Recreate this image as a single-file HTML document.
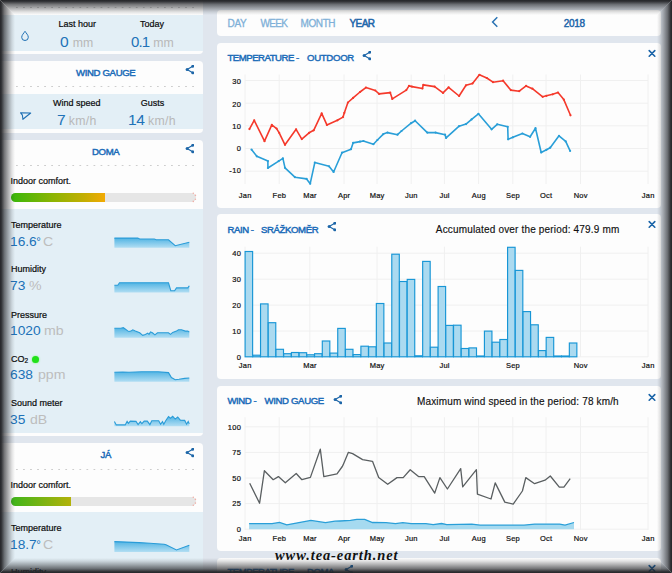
<!DOCTYPE html>
<html><head><meta charset="utf-8"><style>
*{box-sizing:border-box;margin:0;padding:0}
html,body{width:672px;height:573px;overflow:hidden;background:#e0e6ee;font-family:"Liberation Sans",sans-serif;}
.abs{position:absolute}
.card{position:absolute;background:#fdfdfd;border-radius:4px;overflow:hidden}
.blue{position:absolute;background:#e3eff6}
.dots{position:absolute;height:1px;background-image:linear-gradient(90deg,#cdcdcd 0,#cdcdcd 2px,transparent 2px);background-size:7.05px 1px}
.t{position:absolute;white-space:pre;line-height:1}
.ic{position:absolute}
.xl{position:absolute;width:30.4px;text-align:center;font-size:7.5px;line-height:10px;letter-spacing:0.2px;color:#111;-webkit-text-stroke:0.2px #111}
.yl{position:absolute;width:30.4px;text-align:right;font-size:7.5px;line-height:10px;letter-spacing:0.4px;color:#111;-webkit-text-stroke:0.2px #111}
.lbl{font-size:9px;color:#0a0a0a;-webkit-text-stroke:0.2px #0a0a0a}
.val{font-size:15px;color:#2072b8;transform:scaleX(1.04);transform-origin:0 0}
.unit{font-size:12.3px;color:#b8b8b8}
.stitle{font-size:9.6px;color:#1a6bb8;letter-spacing:-0.35px;-webkit-text-stroke:0.45px #1a6bb8}
.mtitle{font-size:9.6px;color:#1a6bb8;letter-spacing:-0.45px;-webkit-text-stroke:0.45px #1a6bb8}
.sval{font-size:12.5px;color:#2072b8;transform:scaleX(1.1);transform-origin:0 0}
.sunit{font-size:12.5px;color:#bdbdbd;transform:scaleX(1.13);transform-origin:0 0}
</style></head><body>
<!-- sidebar -->
<div class="card" style="left:-6px;top:-20px;width:209px;height:74px">
  <div class="dots" style="left:22px;top:27px;width:180px"></div>
  <div class="blue" style="left:0;top:35px;width:209px;height:35.5px"></div>
</div>
<div class="card" style="left:-6px;top:61px;width:209px;height:72px">
  <div class="dots" style="left:22px;top:25px;width:180px"></div>
  <div class="blue" style="left:0;top:33px;width:209px;height:34.5px"></div>
</div>
<div class="card" style="left:-6px;top:140px;width:209px;height:296.1px">
  <div class="dots" style="left:22px;top:25px;width:180px"></div>
  <div class="blue" style="left:0;top:68.6px;width:209px;height:224.1px"></div>
</div>
<div class="card" style="left:-6px;top:442.8px;width:209px;height:200px">
  <div class="dots" style="left:22px;top:26px;width:180px"></div>
  <div class="blue" style="left:0;top:69.7px;width:209px;height:200px"></div>
</div>

<!-- sidebar content card1 -->
<svg class="ic" style="left:20px;top:29px" width="10" height="13" viewBox="0 0 10 13"><path d="M5,2.3 C3.8,4.3 1.7,6 1.7,8.3 A3.3,3.2 0 0 0 8.3,8.3 C8.3,6 6.2,4.3 5,2.3 Z" fill="none" stroke="#1f70b4" stroke-width="1"/></svg>
<div class="t lbl" style="left:58.5px;top:19.5px">Last hour</div>
<div class="t lbl" style="left:140px;top:19.5px">Today</div>
<div class="t val" style="left:59.7px;top:33.5px">0</div><div class="t unit" style="left:72.8px;top:36.5px">mm</div>
<div class="t val" style="left:131px;top:33.5px;letter-spacing:-0.9px;transform:none">0.1</div><div class="t unit" style="left:153.3px;top:36.5px">mm</div>

<!-- card2 -->
<div class="t stitle" style="left:76px;top:67.5px">WIND GAUGE</div>
<svg class="ic" style="left:185.3px;top:65px" width="9" height="10" viewBox="0 0 9 10"><path d="M7.8,1.3 L2.1,4.5 L7.7,7.7" fill="none" stroke="#1d66a8" stroke-width="1.2"/><circle cx="7.8" cy="1.3" r="1.5" fill="#1d66a8"/><circle cx="2.1" cy="4.5" r="1.5" fill="#1d66a8"/><circle cx="7.7" cy="7.8" r="1.5" fill="#1d66a8"/></svg>
<svg class="ic" style="left:19px;top:110px" width="14" height="12" viewBox="0 0 14 12"><path d="M1.6,2.8 L11.7,3 L3.9,9.3 L3.4,5.2 Z" fill="none" stroke="#1f70b4" stroke-width="1.1" stroke-linejoin="round"/></svg>
<div class="t lbl" style="left:53px;top:98.5px">Wind speed</div>
<div class="t lbl" style="left:140.8px;top:98.5px">Gusts</div>
<div class="t val" style="left:56.5px;top:111.5px">7</div><div class="t unit" style="left:68.8px;top:114.5px;letter-spacing:0.3px">km/h</div>
<div class="t val" style="left:128px;top:111.5px;letter-spacing:-0.5px">14</div><div class="t unit" style="left:148px;top:114.5px;letter-spacing:0.3px">km/h</div>

<!-- card3 DOMA -->
<div class="t stitle" style="left:92px;top:147px">DOMA</div>
<svg class="ic" style="left:185.3px;top:144px" width="9" height="10" viewBox="0 0 9 10"><path d="M7.8,1.3 L2.1,4.5 L7.7,7.7" fill="none" stroke="#1d66a8" stroke-width="1.2"/><circle cx="7.8" cy="1.3" r="1.5" fill="#1d66a8"/><circle cx="2.1" cy="4.5" r="1.5" fill="#1d66a8"/><circle cx="7.7" cy="7.8" r="1.5" fill="#1d66a8"/></svg>
<div class="t lbl" style="left:10.5px;top:176.5px">Indoor comfort.</div>
<div class="abs" style="left:11px;top:193px;width:185px;height:9px;border-radius:4.5px;background:#e6e6e6;overflow:hidden"><div style="width:94px;height:9px;background:linear-gradient(90deg,#38b70a,#8db402 45%,#c4ae02 78%,#f2aa04)"></div></div>
<svg class="ic" style="left:190px;top:190px" width="8" height="14"><g fill="#f0b0a8"><circle cx="3.3" cy="3.3" r="0.8"/><circle cx="5.4" cy="5.4" r="0.8"/><circle cx="5.4" cy="9.3" r="0.8"/><circle cx="3.3" cy="11.4" r="0.8"/></g></svg>
<div class="t lbl" style="left:11px;top:220.6px">Temperature</div>
<div class="t sval" style="left:10px;top:235.5px">16.6<span style="margin-left:-0.6px;font-size:10.5px;vertical-align:1px">°</span></div><div class="t sunit" style="left:42.5px;top:235.5px">C</div>
<div class="t lbl" style="left:11px;top:264.6px">Humidity</div>
<div class="t sval" style="left:10px;top:280px">73</div><div class="t sunit" style="left:29.3px;top:280px">%</div>
<div class="t lbl" style="left:11px;top:310.5px">Pressure</div>
<div class="t sval" style="left:10px;top:324.5px">1020</div><div class="t sunit" style="left:43.7px;top:324.5px">mb</div>
<div class="t lbl" style="left:11px;top:354.5px">CO<span style="font-size:6.5px;position:relative;top:1.5px">2</span></div>
<div class="abs" style="left:32px;top:355.5px;width:7px;height:7px;border-radius:50%;background:#22e01a;box-shadow:0 0 2px #6f6"></div>
<div class="t sval" style="left:10px;top:369px">638</div><div class="t sunit" style="left:37.8px;top:369px">ppm</div>
<div class="t lbl" style="left:11px;top:399px">Sound meter</div>
<div class="t sval" style="left:10px;top:413.5px">35</div><div class="t sunit" style="left:29.5px;top:413.5px">dB</div>

<!-- card4 JA -->
<div class="t stitle" style="left:100.5px;top:449.5px">JÁ</div>
<svg class="ic" style="left:185.3px;top:448px" width="9" height="10" viewBox="0 0 9 10"><path d="M7.8,1.3 L2.1,4.5 L7.7,7.7" fill="none" stroke="#1d66a8" stroke-width="1.2"/><circle cx="7.8" cy="1.3" r="1.5" fill="#1d66a8"/><circle cx="2.1" cy="4.5" r="1.5" fill="#1d66a8"/><circle cx="7.7" cy="7.8" r="1.5" fill="#1d66a8"/></svg>
<div class="t lbl" style="left:10.5px;top:480.5px">Indoor comfort.</div>
<div class="abs" style="left:11px;top:497px;width:185px;height:8.5px;border-radius:4.5px;background:#e6e6e6;overflow:hidden"><div style="width:60px;height:9px;background:linear-gradient(90deg,#3db51b,#b3b20a)"></div></div>
<svg class="ic" style="left:190px;top:494px" width="8" height="14"><g fill="#f0b0a8"><circle cx="3.3" cy="3.3" r="0.8"/><circle cx="5.4" cy="5.4" r="0.8"/><circle cx="5.4" cy="9.1" r="0.8"/><circle cx="3.3" cy="11.2" r="0.8"/></g></svg>
<div class="t lbl" style="left:11px;top:524px">Temperature</div>
<div class="t sval" style="left:10px;top:538.5px">18.7<span style="margin-left:-0.6px;font-size:10.5px;vertical-align:1px">°</span></div><div class="t sunit" style="left:42.5px;top:538.5px">C</div>
<div class="t lbl" style="left:11px;top:568px">Humidity</div>

<!-- main header -->
<div class="card" style="left:217px;top:10px;width:444px;height:25.8px"></div>
<div class="t" style="left:227.5px;top:18.5px;font-size:10px;color:#7fb0d8;letter-spacing:-0.3px;-webkit-text-stroke:0.3px #7fb0d8">DAY</div>
<div class="t" style="left:260.5px;top:18.5px;font-size:10px;color:#7fb0d8;letter-spacing:-0.7px;-webkit-text-stroke:0.3px #7fb0d8">WEEK</div>
<div class="t" style="left:300.5px;top:18.5px;font-size:10px;color:#7fb0d8;letter-spacing:-0.4px;-webkit-text-stroke:0.3px #7fb0d8">MONTH</div>
<div class="t" style="left:349.5px;top:18.5px;font-size:10px;color:#1d66aa;letter-spacing:-0.55px;-webkit-text-stroke:0.5px #1d66aa">YEAR</div>
<svg class="ic" style="left:490px;top:16px" width="10" height="12" viewBox="0 0 10 12"><path d="M7.3,1.3 L2.6,6 L7.3,10.7" fill="none" stroke="#2a73b3" stroke-width="1.5"/></svg>
<div class="t" style="left:563.8px;top:18.5px;font-size:10px;color:#1d66aa;letter-spacing:-0.35px;-webkit-text-stroke:0.45px #1d66aa">2018</div>

<!-- cards -->
<div class="card" style="left:217px;top:43px;width:444px;height:164.8px"></div>
<div class="card" style="left:217px;top:214.2px;width:444px;height:164.8px"></div>
<div class="card" style="left:217px;top:385.6px;width:444px;height:165.4px"></div>
<div class="card" style="left:217px;top:558px;width:444px;height:40px"></div>

<div class="t mtitle" style="left:227.5px;top:52.8px;letter-spacing:-0.5px">TEMPERATURE -</div><div class="t mtitle" style="left:307px;top:52.8px;letter-spacing:-0.3px">OUTDOOR</div>
<svg class="ic" style="left:362px;top:51px" width="9" height="10" viewBox="0 0 9 10"><path d="M7.8,1.3 L2.1,4.5 L7.7,7.7" fill="none" stroke="#1d66a8" stroke-width="1.2"/><circle cx="7.8" cy="1.3" r="1.5" fill="#1d66a8"/><circle cx="2.1" cy="4.5" r="1.5" fill="#1d66a8"/><circle cx="7.7" cy="7.8" r="1.5" fill="#1d66a8"/></svg>
<svg class="ic" style="left:647.9px;top:49px" width="8" height="9" viewBox="0 0 8 9"><path d="M1.2,1.6 L6.8,7.2 M6.8,1.6 L1.2,7.2" stroke="#1a64a8" stroke-width="1.6" stroke-linecap="round"/></svg>
<div class="t mtitle" style="left:227.5px;top:224.5px">RAIN -</div><div class="t mtitle" style="left:261px;top:224.5px;letter-spacing:-0.4px">SRÁŽKOMĚR</div>
<svg class="ic" style="left:326.5px;top:222px" width="9" height="10" viewBox="0 0 9 10"><path d="M7.8,1.3 L2.1,4.5 L7.7,7.7" fill="none" stroke="#1d66a8" stroke-width="1.2"/><circle cx="7.8" cy="1.3" r="1.5" fill="#1d66a8"/><circle cx="2.1" cy="4.5" r="1.5" fill="#1d66a8"/><circle cx="7.7" cy="7.8" r="1.5" fill="#1d66a8"/></svg>
<div class="t" style="left:435.8px;top:225px;font-size:10px;letter-spacing:0.17px;color:#111;-webkit-text-stroke:0.15px #111">Accumulated over the period: 479.9 mm</div>
<svg class="ic" style="left:648px;top:220px" width="8" height="9" viewBox="0 0 8 9"><path d="M1.2,1.6 L6.8,7.2 M6.8,1.6 L1.2,7.2" stroke="#1a64a8" stroke-width="1.6" stroke-linecap="round"/></svg>
<div class="t mtitle" style="left:227.5px;top:396px">WIND -</div><div class="t mtitle" style="left:264.5px;top:396px;letter-spacing:-0.35px">WIND GAUGE</div>
<svg class="ic" style="left:333px;top:394.5px" width="9" height="10" viewBox="0 0 9 10"><path d="M7.8,1.3 L2.1,4.5 L7.7,7.7" fill="none" stroke="#1d66a8" stroke-width="1.2"/><circle cx="7.8" cy="1.3" r="1.5" fill="#1d66a8"/><circle cx="2.1" cy="4.5" r="1.5" fill="#1d66a8"/><circle cx="7.7" cy="7.8" r="1.5" fill="#1d66a8"/></svg>
<div class="t" style="left:417px;top:396.5px;font-size:10px;letter-spacing:0.15px;color:#111;-webkit-text-stroke:0.15px #111">Maximum wind speed in the period: 78 km/h</div>
<svg class="ic" style="left:647.5px;top:392.6px" width="8" height="9" viewBox="0 0 8 9"><path d="M1.2,1.6 L6.8,7.2 M6.8,1.6 L1.2,7.2" stroke="#1a64a8" stroke-width="1.6" stroke-linecap="round"/></svg>
<div class="t mtitle" style="left:227.5px;top:567px;letter-spacing:-0.5px">TEMPERATURE -</div><div class="t mtitle" style="left:307px;top:567px">DOMA</div>
<svg class="ic" style="left:344px;top:565px" width="9" height="10" viewBox="0 0 9 10"><path d="M7.8,1.3 L2.1,4.5 L7.7,7.7" fill="none" stroke="#1d66a8" stroke-width="1.2"/><circle cx="7.8" cy="1.3" r="1.5" fill="#1d66a8"/><circle cx="2.1" cy="4.5" r="1.5" fill="#1d66a8"/><circle cx="7.7" cy="7.8" r="1.5" fill="#1d66a8"/></svg>
<svg class="ic" style="left:647.8px;top:563.8px" width="8" height="9" viewBox="0 0 8 9"><path d="M1.2,1.6 L6.8,7.2 M6.8,1.6 L1.2,7.2" stroke="#1a64a8" stroke-width="1.6" stroke-linecap="round"/></svg>

<svg class="abs" style="left:0;top:0" width="672" height="573" viewBox="0 0 672 573">
<defs><linearGradient id="sg" x1="0" y1="0" x2="0" y2="1"><stop offset="0" stop-color="#52b4e3"/><stop offset="1" stop-color="#b2def3"/></linearGradient></defs>
<g stroke="#f0f0f0" stroke-width="1"><line x1="245" y1="80.5" x2="648" y2="80.5"/><line x1="245" y1="103.2" x2="648" y2="103.2"/><line x1="245" y1="125.8" x2="648" y2="125.8"/><line x1="245" y1="148.5" x2="648" y2="148.5"/><line x1="245" y1="171.2" x2="648" y2="171.2"/><line x1="245" y1="74.5" x2="245" y2="184"/><line x1="279.2" y1="74.5" x2="279.2" y2="184"/><line x1="309.8" y1="74.5" x2="309.8" y2="184"/><line x1="344" y1="74.5" x2="344" y2="184"/><line x1="377" y1="74.5" x2="377" y2="184"/><line x1="411.2" y1="74.5" x2="411.2" y2="184"/><line x1="444.4" y1="74.5" x2="444.4" y2="184"/><line x1="478.6" y1="74.5" x2="478.6" y2="184"/><line x1="512.8" y1="74.5" x2="512.8" y2="184"/><line x1="546" y1="74.5" x2="546" y2="184"/><line x1="580.5" y1="74.5" x2="580.5" y2="184"/><line x1="648" y1="74.5" x2="648" y2="184"/></g>
<polyline points="249.4,129.1 254.2,120.3 264.5,141.2 271.8,124.9 276.6,128.6 279.2,132.8 285.0,144.8 296.1,129.3 301.8,139.1 309.1,132.8 313.7,130.3 321.7,113.4 326.9,124.9 337.4,120.3 343.0,117.1 344.3,112.9 347.9,102.5 353.1,97.9 360.0,92.0 365.9,87.6 375.3,90.5 379.1,93.9 390.2,92.6 392.3,98.9 406.3,90.1 409.0,85.9 412.0,86.6 422.4,88.5 423.3,84.9 434.6,86.6 443.0,92.9 448.6,87.4 459.1,96.0 466.0,85.3 472.5,83.4 479.4,74.8 486.8,78.0 493.0,82.2 503.1,80.7 510.8,90.1 519.2,91.2 526.1,85.9 532.4,88.7 542.7,96.8 546.4,95.8 552.7,94.3 558.0,92.6 563.8,99.6 570.5,115.3" fill="none" stroke="#f5392b" stroke-width="1.6" stroke-linejoin="round"/>
<polyline points="251.5,149.6 256.8,156.3 267.9,161.1 267.9,168.0 278.7,161.1 282.9,158.4 285.0,167.8 294.9,177.2 306.6,178.9 310.2,183.7 314.8,162.6 329.0,166.3 333.6,172.0 342.0,152.7 351.0,149.2 353.1,142.9 360.0,141.6 363.4,141.0 373.4,144.2 377.4,140.0 383.3,134.1 387.5,132.6 397.5,134.7 401.5,131.0 411.1,123.2 415.1,120.7 427.3,132.6 435.6,132.6 445.1,134.7 446.1,137.9 459.1,126.2 466.0,124.1 471.6,119.4 478.4,113.8 491.6,129.3 497.2,124.3 507.7,126.8 508.1,139.3 512.9,137.3 522.4,133.5 530.1,136.8 535.5,128.2 541.2,152.5 546.4,149.8 550.2,147.7 559.0,135.8 565.7,141.4 570.1,150.9" fill="none" stroke="#2a9fd8" stroke-width="1.6" stroke-linejoin="round"/>
<circle cx="249.4" cy="129.1" r="1.1" fill="#f5392b"/>
<circle cx="254.2" cy="120.3" r="1.1" fill="#f5392b"/>
<circle cx="264.5" cy="141.2" r="1.1" fill="#f5392b"/>
<circle cx="271.8" cy="124.9" r="1.1" fill="#f5392b"/>
<circle cx="276.6" cy="128.6" r="1.1" fill="#f5392b"/>
<circle cx="279.2" cy="132.8" r="1.1" fill="#f5392b"/>
<circle cx="285" cy="144.8" r="1.1" fill="#f5392b"/>
<circle cx="296.1" cy="129.3" r="1.1" fill="#f5392b"/>
<circle cx="301.8" cy="139.1" r="1.1" fill="#f5392b"/>
<circle cx="309.1" cy="132.8" r="1.1" fill="#f5392b"/>
<circle cx="313.7" cy="130.3" r="1.1" fill="#f5392b"/>
<circle cx="321.7" cy="113.4" r="1.1" fill="#f5392b"/>
<circle cx="326.9" cy="124.9" r="1.1" fill="#f5392b"/>
<circle cx="337.4" cy="120.3" r="1.1" fill="#f5392b"/>
<circle cx="343" cy="117.1" r="1.1" fill="#f5392b"/>
<circle cx="344.3" cy="112.9" r="1.1" fill="#f5392b"/>
<circle cx="347.9" cy="102.5" r="1.1" fill="#f5392b"/>
<circle cx="353.1" cy="97.9" r="1.1" fill="#f5392b"/>
<circle cx="360" cy="92" r="1.1" fill="#f5392b"/>
<circle cx="365.9" cy="87.6" r="1.1" fill="#f5392b"/>
<circle cx="375.3" cy="90.5" r="1.1" fill="#f5392b"/>
<circle cx="379.1" cy="93.9" r="1.1" fill="#f5392b"/>
<circle cx="390.2" cy="92.6" r="1.1" fill="#f5392b"/>
<circle cx="392.3" cy="98.9" r="1.1" fill="#f5392b"/>
<circle cx="406.3" cy="90.1" r="1.1" fill="#f5392b"/>
<circle cx="409" cy="85.9" r="1.1" fill="#f5392b"/>
<circle cx="412" cy="86.6" r="1.1" fill="#f5392b"/>
<circle cx="422.4" cy="88.5" r="1.1" fill="#f5392b"/>
<circle cx="423.3" cy="84.9" r="1.1" fill="#f5392b"/>
<circle cx="434.6" cy="86.6" r="1.1" fill="#f5392b"/>
<circle cx="443" cy="92.9" r="1.1" fill="#f5392b"/>
<circle cx="448.6" cy="87.4" r="1.1" fill="#f5392b"/>
<circle cx="459.1" cy="96" r="1.1" fill="#f5392b"/>
<circle cx="466" cy="85.3" r="1.1" fill="#f5392b"/>
<circle cx="472.5" cy="83.4" r="1.1" fill="#f5392b"/>
<circle cx="479.4" cy="74.8" r="1.1" fill="#f5392b"/>
<circle cx="486.8" cy="78" r="1.1" fill="#f5392b"/>
<circle cx="493" cy="82.2" r="1.1" fill="#f5392b"/>
<circle cx="503.1" cy="80.7" r="1.1" fill="#f5392b"/>
<circle cx="510.8" cy="90.1" r="1.1" fill="#f5392b"/>
<circle cx="519.2" cy="91.2" r="1.1" fill="#f5392b"/>
<circle cx="526.1" cy="85.9" r="1.1" fill="#f5392b"/>
<circle cx="532.4" cy="88.7" r="1.1" fill="#f5392b"/>
<circle cx="542.7" cy="96.8" r="1.1" fill="#f5392b"/>
<circle cx="546.4" cy="95.8" r="1.1" fill="#f5392b"/>
<circle cx="552.7" cy="94.3" r="1.1" fill="#f5392b"/>
<circle cx="558" cy="92.6" r="1.1" fill="#f5392b"/>
<circle cx="563.8" cy="99.6" r="1.1" fill="#f5392b"/>
<circle cx="570.5" cy="115.3" r="1.1" fill="#f5392b"/>
<circle cx="251.5" cy="149.6" r="1.1" fill="#2a9fd8"/>
<circle cx="256.8" cy="156.3" r="1.1" fill="#2a9fd8"/>
<circle cx="267.9" cy="161.1" r="1.1" fill="#2a9fd8"/>
<circle cx="267.9" cy="168" r="1.1" fill="#2a9fd8"/>
<circle cx="278.7" cy="161.1" r="1.1" fill="#2a9fd8"/>
<circle cx="282.9" cy="158.4" r="1.1" fill="#2a9fd8"/>
<circle cx="285" cy="167.8" r="1.1" fill="#2a9fd8"/>
<circle cx="294.9" cy="177.2" r="1.1" fill="#2a9fd8"/>
<circle cx="306.6" cy="178.9" r="1.1" fill="#2a9fd8"/>
<circle cx="310.2" cy="183.7" r="1.1" fill="#2a9fd8"/>
<circle cx="314.8" cy="162.6" r="1.1" fill="#2a9fd8"/>
<circle cx="329" cy="166.3" r="1.1" fill="#2a9fd8"/>
<circle cx="333.6" cy="172" r="1.1" fill="#2a9fd8"/>
<circle cx="342" cy="152.7" r="1.1" fill="#2a9fd8"/>
<circle cx="351" cy="149.2" r="1.1" fill="#2a9fd8"/>
<circle cx="353.1" cy="142.9" r="1.1" fill="#2a9fd8"/>
<circle cx="360" cy="141.6" r="1.1" fill="#2a9fd8"/>
<circle cx="363.4" cy="141" r="1.1" fill="#2a9fd8"/>
<circle cx="373.4" cy="144.2" r="1.1" fill="#2a9fd8"/>
<circle cx="377.4" cy="140" r="1.1" fill="#2a9fd8"/>
<circle cx="383.3" cy="134.1" r="1.1" fill="#2a9fd8"/>
<circle cx="387.5" cy="132.6" r="1.1" fill="#2a9fd8"/>
<circle cx="397.5" cy="134.7" r="1.1" fill="#2a9fd8"/>
<circle cx="401.5" cy="131" r="1.1" fill="#2a9fd8"/>
<circle cx="411.1" cy="123.2" r="1.1" fill="#2a9fd8"/>
<circle cx="415.1" cy="120.7" r="1.1" fill="#2a9fd8"/>
<circle cx="427.3" cy="132.6" r="1.1" fill="#2a9fd8"/>
<circle cx="435.6" cy="132.6" r="1.1" fill="#2a9fd8"/>
<circle cx="445.1" cy="134.7" r="1.1" fill="#2a9fd8"/>
<circle cx="446.1" cy="137.9" r="1.1" fill="#2a9fd8"/>
<circle cx="459.1" cy="126.2" r="1.1" fill="#2a9fd8"/>
<circle cx="466" cy="124.1" r="1.1" fill="#2a9fd8"/>
<circle cx="471.6" cy="119.4" r="1.1" fill="#2a9fd8"/>
<circle cx="478.4" cy="113.8" r="1.1" fill="#2a9fd8"/>
<circle cx="491.6" cy="129.3" r="1.1" fill="#2a9fd8"/>
<circle cx="497.2" cy="124.3" r="1.1" fill="#2a9fd8"/>
<circle cx="507.7" cy="126.8" r="1.1" fill="#2a9fd8"/>
<circle cx="508.1" cy="139.3" r="1.1" fill="#2a9fd8"/>
<circle cx="512.9" cy="137.3" r="1.1" fill="#2a9fd8"/>
<circle cx="522.4" cy="133.5" r="1.1" fill="#2a9fd8"/>
<circle cx="530.1" cy="136.8" r="1.1" fill="#2a9fd8"/>
<circle cx="535.5" cy="128.2" r="1.1" fill="#2a9fd8"/>
<circle cx="541.2" cy="152.5" r="1.1" fill="#2a9fd8"/>
<circle cx="546.4" cy="149.8" r="1.1" fill="#2a9fd8"/>
<circle cx="550.2" cy="147.7" r="1.1" fill="#2a9fd8"/>
<circle cx="559" cy="135.8" r="1.1" fill="#2a9fd8"/>
<circle cx="565.7" cy="141.4" r="1.1" fill="#2a9fd8"/>
<circle cx="570.1" cy="150.9" r="1.1" fill="#2a9fd8"/>
<g stroke="#f0f0f0" stroke-width="1"><line x1="245" y1="253.2" x2="648" y2="253.2"/><line x1="245" y1="279.2" x2="648" y2="279.2"/><line x1="245" y1="305.1" x2="648" y2="305.1"/><line x1="245" y1="331" x2="648" y2="331"/><line x1="245" y1="356.8" x2="648" y2="356.8"/><line x1="245" y1="246.7" x2="245" y2="357"/><line x1="309.8" y1="246.7" x2="309.8" y2="357"/><line x1="377" y1="246.7" x2="377" y2="357"/><line x1="444.4" y1="246.7" x2="444.4" y2="357"/><line x1="512.8" y1="246.7" x2="512.8" y2="357"/><line x1="580.5" y1="246.7" x2="580.5" y2="357"/><line x1="648" y1="246.7" x2="648" y2="357"/></g>
<g fill="#abdaf0" stroke="#1796d6" stroke-width="1.15"><rect x="245.10" y="251.5" width="7.52" height="105.3"/><rect x="252.82" y="355.2" width="7.52" height="1.6"/><rect x="260.54" y="303.9" width="7.52" height="52.9"/><rect x="268.26" y="322.7" width="7.52" height="34.1"/><rect x="275.98" y="349.3" width="7.52" height="7.5"/><rect x="283.70" y="353.7" width="7.52" height="3.1"/><rect x="291.42" y="352.5" width="7.52" height="4.3"/><rect x="299.14" y="352.7" width="7.52" height="4.1"/><rect x="306.86" y="354.8" width="7.52" height="2.0"/><rect x="314.58" y="353.7" width="7.52" height="3.1"/><rect x="322.30" y="341.0" width="7.52" height="15.8"/><rect x="330.02" y="353.1" width="7.52" height="3.7"/><rect x="337.74" y="328.4" width="7.52" height="28.4"/><rect x="345.46" y="349.3" width="7.52" height="7.5"/><rect x="353.18" y="354.6" width="7.52" height="2.2"/><rect x="360.90" y="346.2" width="7.52" height="10.6"/><rect x="368.62" y="346.8" width="7.52" height="10.0"/><rect x="376.34" y="303.5" width="7.52" height="53.3"/><rect x="384.06" y="343.0" width="7.52" height="13.8"/><rect x="391.78" y="254.2" width="7.52" height="102.6"/><rect x="399.50" y="281.5" width="7.52" height="75.3"/><rect x="407.22" y="279.4" width="7.52" height="77.4"/><rect x="414.94" y="355.8" width="7.52" height="1.0"/><rect x="422.66" y="261.4" width="7.52" height="95.4"/><rect x="430.38" y="347.2" width="7.52" height="9.6"/><rect x="438.10" y="286.5" width="7.52" height="70.3"/><rect x="445.82" y="325.4" width="7.52" height="31.4"/><rect x="453.54" y="325.2" width="7.52" height="31.6"/><rect x="461.26" y="348.5" width="7.52" height="8.3"/><rect x="468.98" y="347.9" width="7.52" height="8.9"/><rect x="476.70" y="356.0" width="7.52" height="0.8"/><rect x="484.42" y="331.1" width="7.52" height="25.7"/><rect x="492.14" y="342.2" width="7.52" height="14.6"/><rect x="499.86" y="339.5" width="7.52" height="17.3"/><rect x="507.58" y="247.3" width="7.52" height="109.5"/><rect x="515.30" y="270.4" width="7.52" height="86.4"/><rect x="523.02" y="311.6" width="7.52" height="45.2"/><rect x="530.74" y="324.8" width="7.52" height="32.0"/><rect x="538.46" y="350.6" width="7.52" height="6.2"/><rect x="546.18" y="337.4" width="7.52" height="19.4"/><rect x="553.90" y="356.0" width="7.52" height="0.8"/><rect x="561.62" y="356.0" width="7.52" height="0.8"/><rect x="569.34" y="343.0" width="7.52" height="13.8"/></g>
<g stroke="#f0f0f0" stroke-width="1"><line x1="245" y1="426.8" x2="648" y2="426.8"/><line x1="245" y1="452.4" x2="648" y2="452.4"/><line x1="245" y1="478" x2="648" y2="478"/><line x1="245" y1="503.6" x2="648" y2="503.6"/><line x1="245" y1="529.2" x2="648" y2="529.2"/><line x1="245" y1="417.2" x2="245" y2="530"/><line x1="279.2" y1="417.2" x2="279.2" y2="530"/><line x1="309.8" y1="417.2" x2="309.8" y2="530"/><line x1="344" y1="417.2" x2="344" y2="530"/><line x1="377" y1="417.2" x2="377" y2="530"/><line x1="411.2" y1="417.2" x2="411.2" y2="530"/><line x1="444.4" y1="417.2" x2="444.4" y2="530"/><line x1="478.6" y1="417.2" x2="478.6" y2="530"/><line x1="512.8" y1="417.2" x2="512.8" y2="530"/><line x1="546" y1="417.2" x2="546" y2="530"/><line x1="580.5" y1="417.2" x2="580.5" y2="530"/><line x1="648" y1="417.2" x2="648" y2="530"/></g>
<path d="M249.1,523.7 L272.1,523.7 L279.5,522.3 L286.8,524.8 L296.2,523.1 L310.9,520.4 L325.5,522.7 L335.0,521.2 L340.0,521.0 L350.5,520.4 L356.8,519.3 L364.7,519.3 L372.5,522.5 L386.1,522.7 L395.5,523.7 L402.8,522.7 L411.2,523.7 L425.9,523.7 L433.2,524.6 L441.6,523.5 L446.8,524.6 L471.8,524.1 L480.1,525.2 L524.1,525.2 L534.6,524.1 L559.7,524.1 L565.0,525.2 L574.0,522.5 L574,529.2 L249.1,529.2 Z" fill="#a6daf0"/>
<polyline points="249.1,523.7 272.1,523.7 279.5,522.3 286.8,524.8 296.2,523.1 310.9,520.4 325.5,522.7 335.0,521.2 340.0,521.0 350.5,520.4 356.8,519.3 364.7,519.3 372.5,522.5 386.1,522.7 395.5,523.7 402.8,522.7 411.2,523.7 425.9,523.7 433.2,524.6 441.6,523.5 446.8,524.6 471.8,524.1 480.1,525.2 524.1,525.2 534.6,524.1 559.7,524.1 565.0,525.2 574.0,522.5" fill="none" stroke="#2a9fd8" stroke-width="1.3"/>
<polyline points="249.7,483.3 259.6,503.2 264.4,470.7 273.2,479.7 278.4,476.6 285.3,482.7 296.2,473.5 301.9,479.7 310.4,477.4 320.3,449.2 323.8,476.6 337.0,473.9 342.3,466.5 343.1,464.9 348.4,452.3 352.6,453.6 362.6,459.6 372.5,461.3 378.7,477.4 387.7,484.3 397.0,477.6 403.2,477.6 410.2,469.7 418.5,476.6 424.2,476.6 434.7,493.1 439.9,477.6 447.4,489.0 460.7,468.6 462.7,486.9 476.4,469.7 477.4,494.2 491.0,499.0 495.2,482.9 504.8,502.1 513.2,504.2 522.4,491.0 525.8,477.6 534.6,483.7 545.0,480.2 550.3,476.0 559.3,487.1 563.9,487.1 570.2,478.7" fill="none" stroke="#5a5f61" stroke-width="1.3" stroke-linejoin="round"/>
<path d="M114.4,238.1 L137.8,238.1 L139.7,239.0 L154.3,239.0 L156.2,239.8 L168.5,239.8 L175.2,245.7 L189.3,242.3 L189.3,247.8 L114.4,247.8 Z" fill="url(#sg)"/><path d="M114.4,238.1 L137.8,238.1 L139.7,239.0 L154.3,239.0 L156.2,239.8 L168.5,239.8 L175.2,245.7 L189.3,242.3" fill="none" stroke="#2a9cd8" stroke-width="1.1"/>
<path d="M114.4,285.3 L117.8,285.3 L119.5,282.8 L168.5,282.8 L170.8,290.7 L174.6,290.7 L176.5,287.9 L187.8,287.9 L189.3,285.8 L189.3,292.6 L114.4,292.6 Z" fill="url(#sg)"/><path d="M114.4,285.3 L117.8,285.3 L119.5,282.8 L168.5,282.8 L170.8,290.7 L174.6,290.7 L176.5,287.9 L187.8,287.9 L189.3,285.8" fill="none" stroke="#2a9cd8" stroke-width="1.1"/>
<path d="M114.4,328.3 L120.8,328.3 L123.3,327.7 L125.2,329.0 L127.7,330.9 L129.0,331.5 L130.9,331.1 L132.8,329.8 L135.3,331.1 L139.7,332.8 L142.7,335.3 L145.4,334.4 L147.7,333.1 L149.0,334.4 L150.5,331.9 L152.4,332.8 L154.9,334.9 L157.5,332.8 L168.5,332.8 L170.5,334.4 L172.7,332.4 L176.5,331.1 L178.4,329.8 L181.5,329.8 L185.3,331.1 L187.8,331.1 L189.3,331.9 L189.3,337.8 L114.4,337.8 Z" fill="url(#sg)"/><path d="M114.4,328.3 L120.8,328.3 L123.3,327.7 L125.2,329.0 L127.7,330.9 L129.0,331.5 L130.9,331.1 L132.8,329.8 L135.3,331.1 L139.7,332.8 L142.7,335.3 L145.4,334.4 L147.7,333.1 L149.0,334.4 L150.5,331.9 L152.4,332.8 L154.9,334.9 L157.5,332.8 L168.5,332.8 L170.5,334.4 L172.7,332.4 L176.5,331.1 L178.4,329.8 L181.5,329.8 L185.3,331.1 L187.8,331.1 L189.3,331.9" fill="none" stroke="#2a9cd8" stroke-width="1.1"/>
<path d="M114.4,372.3 L122.7,372.1 L129.0,372.3 L141.6,371.7 L148.0,371.7 L158.1,371.7 L168.5,372.6 L171.4,377.6 L175.2,379.7 L179.0,379.3 L184.7,378.4 L189.3,378.0 L189.3,381.8 L114.4,381.8 Z" fill="url(#sg)"/><path d="M114.4,372.3 L122.7,372.1 L129.0,372.3 L141.6,371.7 L148.0,371.7 L158.1,371.7 L168.5,372.6 L171.4,377.6 L175.2,379.7 L179.0,379.3 L184.7,378.4 L189.3,378.0" fill="none" stroke="#2a9cd8" stroke-width="1.1"/>
<path d="M114.4,421.4 L116.3,424.9 L125.2,424.9 L127.1,421.4 L128.4,423.3 L130.3,421.1 L136.0,421.4 L138.1,424.6 L140.4,421.6 L141.9,423.7 L144.2,421.1 L147.3,421.1 L149.9,424.6 L151.8,420.8 L158.7,420.8 L160.6,424.2 L162.5,421.6 L163.8,424.2 L165.7,420.8 L168.5,416.6 L170.5,418.2 L172.7,416.3 L175.2,419.1 L177.7,417.0 L180.3,420.1 L184.7,420.4 L186.6,424.2 L188.2,421.4 L189.3,423.9 L189.3,426.2 L114.4,426.2 Z" fill="url(#sg)"/><path d="M114.4,421.4 L116.3,424.9 L125.2,424.9 L127.1,421.4 L128.4,423.3 L130.3,421.1 L136.0,421.4 L138.1,424.6 L140.4,421.6 L141.9,423.7 L144.2,421.1 L147.3,421.1 L149.9,424.6 L151.8,420.8 L158.7,420.8 L160.6,424.2 L162.5,421.6 L163.8,424.2 L165.7,420.8 L168.5,416.6 L170.5,418.2 L172.7,416.3 L175.2,419.1 L177.7,417.0 L180.3,420.1 L184.7,420.4 L186.6,424.2 L188.2,421.4 L189.3,423.9" fill="none" stroke="#2a9cd8" stroke-width="1.1"/>
<path d="M114.4,541.6 L139.0,542.6 L150.0,543.2 L164.0,544.2 L166.0,544.7 L176.5,550.0 L189.3,545.3 L189.3,552 L114.4,552 Z" fill="url(#sg)"/><path d="M114.4,541.6 L139.0,542.6 L150.0,543.2 L164.0,544.2 L166.0,544.7 L176.5,550.0 L189.3,545.3" fill="none" stroke="#2a9cd8" stroke-width="1.1"/>
</svg>

<div class="yl" style="left:211px;top:77.0px">30</div><div class="yl" style="left:211px;top:100.0px">20</div><div class="yl" style="left:211px;top:122.0px">10</div><div class="yl" style="left:211px;top:144.0px">0</div><div class="yl" style="left:211px;top:166.3px">-10</div>
<div class="xl" style="left:230.0px;top:190.5px">Jan</div><div class="xl" style="left:264.2px;top:190.5px">Feb</div><div class="xl" style="left:294.8px;top:190.5px">Mar</div><div class="xl" style="left:329.0px;top:190.5px">Apr</div><div class="xl" style="left:362.0px;top:190.5px">May</div><div class="xl" style="left:396.2px;top:190.5px">Jun</div><div class="xl" style="left:429.4px;top:190.5px">Jul</div><div class="xl" style="left:463.6px;top:190.5px">Aug</div><div class="xl" style="left:497.8px;top:190.5px">Sep</div><div class="xl" style="left:531.0px;top:190.5px">Oct</div><div class="xl" style="left:565.5px;top:190.5px">Nov</div><div class="xl" style="left:633.0px;top:190.5px">Jan</div>
<div class="yl" style="left:211px;top:249.0px">40</div><div class="yl" style="left:211px;top:275.0px">30</div><div class="yl" style="left:211px;top:301.0px">20</div><div class="yl" style="left:211px;top:327.0px">10</div><div class="yl" style="left:211px;top:352.8px">0</div>
<div class="xl" style="left:230.0px;top:360.8px">Jan</div><div class="xl" style="left:294.8px;top:360.8px">Mar</div><div class="xl" style="left:362.0px;top:360.8px">May</div><div class="xl" style="left:429.4px;top:360.8px">Jul</div><div class="xl" style="left:497.8px;top:360.8px">Sep</div><div class="xl" style="left:565.5px;top:360.8px">Nov</div><div class="xl" style="left:633.0px;top:360.8px">Jan</div>
<div class="yl" style="left:211px;top:423.0px">100</div><div class="yl" style="left:211px;top:448.4px">75</div><div class="yl" style="left:211px;top:474.0px">50</div><div class="yl" style="left:211px;top:499.4px">25</div><div class="yl" style="left:211px;top:525.0px">0</div>
<div class="xl" style="left:230.0px;top:534.0px">Jan</div><div class="xl" style="left:264.2px;top:534.0px">Feb</div><div class="xl" style="left:294.8px;top:534.0px">Mar</div><div class="xl" style="left:329.0px;top:534.0px">Apr</div><div class="xl" style="left:362.0px;top:534.0px">May</div><div class="xl" style="left:396.2px;top:534.0px">Jun</div><div class="xl" style="left:429.4px;top:534.0px">Jul</div><div class="xl" style="left:463.6px;top:534.0px">Aug</div><div class="xl" style="left:497.8px;top:534.0px">Sep</div><div class="xl" style="left:531.0px;top:534.0px">Oct</div><div class="xl" style="left:565.5px;top:534.0px">Nov</div><div class="xl" style="left:633.0px;top:534.0px">Jan</div>

<div class="t" style="left:275px;top:547px;font:bold italic 14.5px 'Liberation Serif';letter-spacing:0.9px;color:#111">www.tea-earth.net</div>

<!-- frame -->
<div class="abs" style="left:0;top:0;width:672px;height:15px;background:linear-gradient(180deg,rgba(36,37,40,1),rgba(36,37,40,0.92) 10%,rgba(36,37,40,0.62) 30%,rgba(36,37,40,0.36) 55%,rgba(36,37,40,0.12) 80%,rgba(36,37,40,0));clip-path:polygon(0 0,672px 0,657px 15px,15px 15px)"></div>
<div class="abs" style="left:0;top:558px;width:672px;height:15px;background:linear-gradient(0deg,rgba(36,37,40,1),rgba(36,37,40,0.92) 10%,rgba(36,37,40,0.62) 30%,rgba(36,37,40,0.36) 55%,rgba(36,37,40,0.12) 80%,rgba(36,37,40,0));clip-path:polygon(15px 0,657px 0,672px 15px,0 15px)"></div>
<div class="abs" style="left:0;top:0;width:15px;height:573px;background:linear-gradient(90deg,rgba(36,37,40,1),rgba(36,37,40,0.92) 10%,rgba(36,37,40,0.62) 30%,rgba(36,37,40,0.36) 55%,rgba(36,37,40,0.12) 80%,rgba(36,37,40,0));clip-path:polygon(0 0,15px 15px,15px 558px,0 573px)"></div>
<div class="abs" style="left:657px;top:0;width:15px;height:573px;background:linear-gradient(270deg,rgba(36,37,40,1),rgba(36,37,40,0.92) 10%,rgba(36,37,40,0.62) 30%,rgba(36,37,40,0.36) 55%,rgba(36,37,40,0.12) 80%,rgba(36,37,40,0));clip-path:polygon(15px 0,15px 573px,0 558px,0 15px)"></div>
</body></html>
